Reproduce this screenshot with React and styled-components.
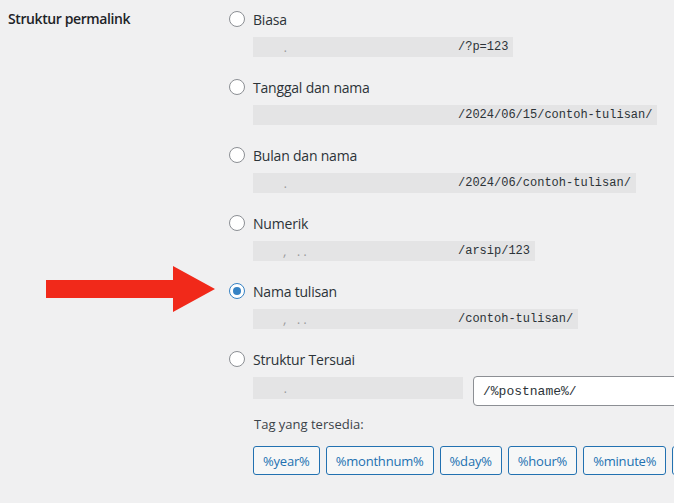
import React from 'react';
import styled, { createGlobalStyle } from 'styled-components';

const GlobalStyle = createGlobalStyle`
    html, body {
        margin: 0;
        background: #f0f0f1;
        overflow: hidden;
    }
    body {
        font-family: 'Open Sans', 'Noto Sans', sans-serif;
        color: #1d2327;
    }
`;

const options = [
    { label: 'Biasa', path: '/?p=123', dots: '.' },
    { label: 'Tanggal dan nama', path: '/2024/06/15/contoh-tulisan/', dots: '' },
    { label: 'Bulan dan nama', path: '/2024/06/contoh-tulisan/', dots: '.' },
    { label: 'Numerik', path: '/arsip/123', dots: ', ..' },
    { label: 'Nama tulisan', path: '/contoh-tulisan/', dots: ', ..', checked: true },
];

const tags = ['%year%', '%monthnum%', '%day%', '%hour%', '%minute%', '%second%'];

const PermalinkSettings = () => {
    return (
        <Page>
            <GlobalStyle />
            <FormTable>
                <RowLabel>Struktur permalink</RowLabel>
                <Options>
                    {options.map((opt) => (
                        <Option key={opt.label}>
                            <RadioRow>
                                <Radio checked={opt.checked} />
                                <RadioText>{opt.label}</RadioText>
                            </RadioRow>
                            <Code>
                                <Domain>{opt.dots}</Domain>
                                {opt.path}
                            </Code>
                        </Option>
                    ))}
                    <Option>
                        <RadioRow>
                            <Radio />
                            <RadioText>Struktur Tersuai</RadioText>
                        </RadioRow>
                        <CustomRow>
                            <Code $tall>
                                <Domain>.</Domain>
                            </Code>
                            <CustomInput defaultValue="/%postname%/" />
                        </CustomRow>
                        <TagsTitle>Tag yang tersedia:</TagsTitle>
                        <TagList>
                            {tags.map((t) => (
                                <TagButton key={t}>{t}</TagButton>
                            ))}
                        </TagList>
                    </Option>
                </Options>
            </FormTable>
            <Arrow viewBox="0 0 170 46" aria-hidden="true">
                <path d="M0 14 H127 V0 L169 23 L127 46 V32 H0 Z" fill="#f1291a" />
            </Arrow>
        </Page>
    );
};

const Page = styled.div`
    position: relative;
    height: 503px;
    padding: 8px 0 0 8px;
    box-sizing: border-box;
`;

const FormTable = styled.div`
    display: grid;
    grid-template-columns: 221px 1fr;
`;

const RowLabel = styled.div`
    font-size: 14px;
    font-weight: 600;
    line-height: 22px;
    letter-spacing: -0.4px;
    color: #1d2327;
`;

const Options = styled.div`
    display: flex;
    flex-direction: column;
    gap: 19px;
`;

const Option = styled.div`
    display: flex;
    flex-direction: column;
`;

const RadioRow = styled.label`
    display: flex;
    align-items: center;
    gap: 8px;
    height: 22px;
`;

const Radio = styled.span`
    position: relative;
    width: 16px;
    height: 16px;
    box-sizing: border-box;
    border-radius: 50%;
    border: 1px solid ${(p) => (p.checked ? '#3582c4' : '#8c8f94')};
    background: #fff;
    flex: none;
    &::after {
        content: '';
        display: ${(p) => (p.checked ? 'block' : 'none')};
        position: absolute;
        left: 3px;
        top: 3px;
        width: 8px;
        height: 8px;
        border-radius: 50%;
        background: #3582c4;
    }
`;

const RadioText = styled.span`
    font-size: 14px;
    letter-spacing: -0.2px;
    color: #2c3338;
`;

const Code = styled.code`
    display: inline-flex;
    align-items: center;
    align-self: flex-start;
    height: ${(p) => (p.$tall ? '22px' : '20px')};
    margin: ${(p) => (p.$tall ? '1px 0 0 24px' : '7px 0 0 24px')};
    padding: 0 5px;
    background: #e4e4e5;
    font-family: 'Liberation Mono', 'DejaVu Sans Mono', monospace;
    font-size: 12px;
    color: #2c3338;
    white-space: pre;
`;

const Domain = styled.span`
    display: inline-block;
    width: 200px;
    padding-left: 24px;
    box-sizing: border-box;
    color: #9a9a9c;
    font-size: 11px;
    line-height: 1;
    padding-top: 4px;
`;

const CustomRow = styled.div`
    display: flex;
    align-items: flex-start;
    margin-top: 6px;
`;

const CustomInput = styled.input`
    flex: none;
    width: 260px;
    height: 30px;
    margin-left: 10px;
    box-sizing: border-box;
    padding: 0 9px;
    border: 1px solid #8c8f94;
    border-radius: 4px;
    background: #fff;
    font-family: 'Liberation Mono', 'DejaVu Sans Mono', monospace;
    font-size: 13px;
    color: #2c3338;
    outline: none;
`;

const TagsTitle = styled.div`
    margin: 9px 0 0 25px;
    font-size: 13px;
    line-height: 18px;
    color: #3c434a;
`;

const TagList = styled.div`
    display: flex;
    gap: 6px;
    margin: 13px 0 0 24px;
    white-space: nowrap;
`;

const TagButton = styled.button`
    flex: none;
    height: 29px;
    padding: 0 9px;
    border: 1px solid #2271b1;
    border-radius: 3px;
    background: #f6f7f7;
    color: #2271b1;
    font-family: 'Open Sans', 'Noto Sans', sans-serif;
    font-size: 13px;
    letter-spacing: -0.2px;
    cursor: pointer;
`;

const Arrow = styled.svg`
    position: absolute;
    left: 46px;
    top: 266px;
    width: 170px;
    height: 46px;
`;

export default PermalinkSettings;
